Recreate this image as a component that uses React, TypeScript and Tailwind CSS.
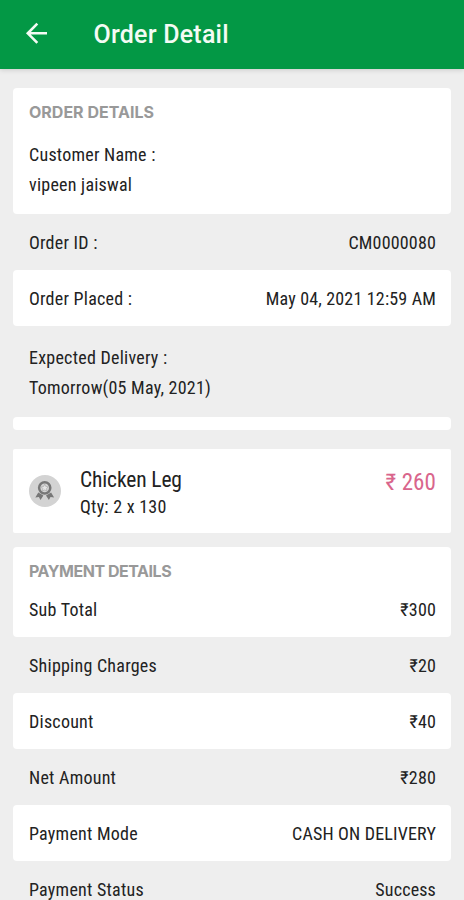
import React from "react";

type RowProps = {
  label: string;
  value: string;
  white?: boolean;
};

type PriceProps = {
  amount: string;
};

const BackArrow: React.FC = () => (
  <svg
    className="mb-[3px] h-6 w-6"
    viewBox="0 0 24 24"
    fill="none"
    stroke="#f4fbf4"
    strokeWidth="2.6"
  >
    <path d="M22 12.3H3.5M12.3 2.7 2.8 12.3l9.5 9.6" />
  </svg>
);

const Badge: React.FC = () => (
  <svg className="h-8 w-8 shrink-0" viewBox="0 0 32 32">
    <circle cx="16" cy="16" r="16" fill="#d3d3d3" />
    <circle cx="15.7" cy="12.8" r="5.6" fill="none" stroke="#777" strokeWidth="2.5" />
    <path
      d="m15.7 9.2 1.1 2.3 2.5.3-1.8 1.8.4 2.5-2.2-1.2-2.2 1.2.4-2.5-1.8-1.8 2.5-.3z"
      fill="#e6e6e6"
      stroke="#999"
      strokeWidth=".5"
    />
    <path
      d="m9.3 17.4-3 5.2 3.6-.5 1.6 2.9 2.9-4.4zM22.1 17.4l3 5.2-3.6-.5-1.6 2.9-2.9-4.4z"
      fill="#777"
    />
  </svg>
);

const Row: React.FC<RowProps> = ({ label, value, white }) => (
  <div
    className={`flex h-14 items-center justify-between rounded pt-[2px] pr-[15px] pl-4 ${
      white ? "bg-white" : ""
    }`}
  >
    <span>{label}</span>
    <span className="tracking-[0.17px]">{value}</span>
  </div>
);

const Price: React.FC<PriceProps> = ({ amount }) => (
  <span className="text-[23px] leading-7 tracking-[0.1px] text-[#d9658c]">
    ₹ {amount}
  </span>
);

const App: React.FC = () => {
  return (
    <div className="h-[900px] w-[464px] overflow-hidden bg-[#eeeeee] font-['Roboto_Condensed','Roboto',sans-serif] text-[18px] leading-[30px] tracking-[0.24px] text-[#222] [font-stretch:75%]">
      <header className="flex h-[69px] items-center bg-[#039845] pl-[25px] shadow-[0_1px_5px_rgba(0,0,0,0.15)]">
        <BackArrow />
        <h1 className="ml-[44.5px] font-['Roboto',sans-serif] text-[25px] font-medium tracking-[0.22px] text-[#f4fbf4] [font-stretch:100%]">
          Order Detail
        </h1>
      </header>

      <main className="px-[13px] pt-[19px]">
        <section>
          <div className="h-[126px] rounded bg-white px-4 pt-[9px]">
            <h2 className="font-['Inter',sans-serif] text-[16px] font-bold tracking-normal text-[#999]">
              ORDER DETAILS
            </h2>
            <p className="mt-[13px]">Customer Name :</p>
            <p>vipeen jaiswal</p>
          </div>
          <Row label="Order ID :" value="CM0000080" />
          <Row label="Order Placed :" value="May 04, 2021 12:59 AM" white />
          <div className="h-[91px] px-4 pt-[17px]">
            <p>Expected Delivery :</p>
            <p>Tomorrow(05 May, 2021)</p>
          </div>
          <div className="h-[13px] rounded bg-white" />
        </section>

        <section className="mt-[19px] flex h-[84px] rounded-xs bg-white pr-[15px] pl-4">
          <div className="mt-[26px]">
            <Badge />
          </div>
          <div className="ml-[19px] flex-1 pt-[17px]">
            <p className="text-[21.5px] leading-[28px] tracking-[-0.13px]">Chicken Leg</p>
            <p className="leading-[25px]">Qty: 2 x 130</p>
          </div>
          <div className="pt-5">
            <Price amount="260" />
          </div>
        </section>

        <section className="mt-[14px]">
          <div className="h-[90px] rounded bg-white pt-[9px]">
            <h2 className="px-4 font-['Inter',sans-serif] text-[16px] font-bold tracking-[-0.47px] text-[#999]">
              PAYMENT DETAILS
            </h2>
            <div className="-mt-[5px]">
              <Row label="Sub Total" value="₹300" />
            </div>
          </div>
          <Row label="Shipping Charges" value="₹20" />
          <Row label="Discount" value="₹40" white />
          <Row label="Net Amount" value="₹280" />
          <Row label="Payment Mode" value="CASH ON DELIVERY" white />
          <Row label="Payment Status" value="Success" />
        </section>
      </main>
    </div>
  );
};

export default App;
